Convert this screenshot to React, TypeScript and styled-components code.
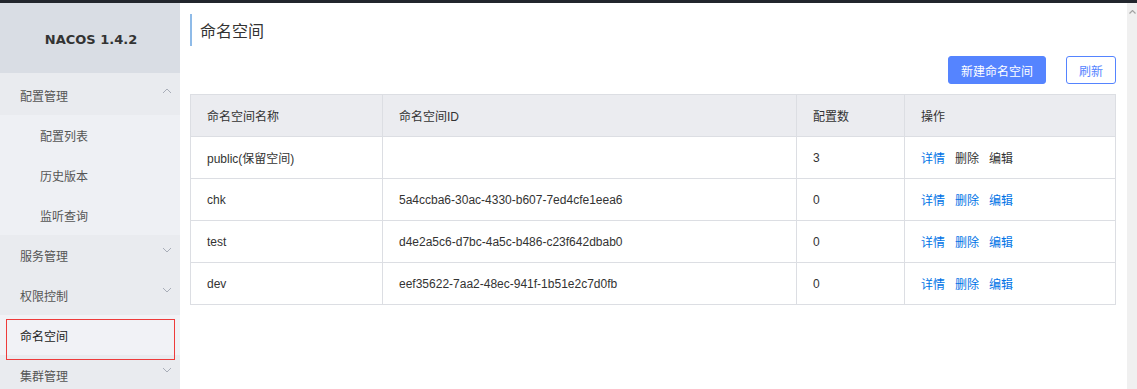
import React from "react";
import styled, { createGlobalStyle } from "styled-components";

const Global = createGlobalStyle`
  html, body { margin: 0; padding: 0; background: #fff; }
  body { font-family: "Liberation Sans", "Noto Sans CJK SC", sans-serif; font-size: 12px; color: #333; }
  * { box-sizing: border-box; }
`;

const Page = styled.div`
  width: 1137px;
  height: 389px;
  overflow: hidden;
  display: flex;
  flex-direction: column;
`;

const TopBar = styled.div`
  height: 3px;
  background: #22262d;
  flex: none;
`;

const Body = styled.div`
  flex: 1;
  display: flex;
  min-height: 0;
`;

const Sidebar = styled.nav`
  width: 180px;
  flex: none;
  background: #e9ebef;
  display: flex;
  flex-direction: column;
  overflow: hidden;
`;

const Brand = styled.div`
  height: 70px;
  flex: none;
  background: #d9dde4;
  display: flex;
  align-items: center;
  justify-content: center;
  font-family: "DejaVu Sans", sans-serif;
  font-weight: bold;
  font-size: 13px;
  color: #333;
  margin-bottom: 2px;
  padding: 3px 0 0 2px;
`;

const MenuItem = styled.div<{ $sub?: boolean; $active?: boolean }>`
  position: relative;
  flex: none;
  height: 40px;
  display: flex;
  align-items: center;
  justify-content: space-between;
  padding: 0 8px 0 ${(p) => (p.$sub ? "40px" : "20px")};
  font-family: "Noto Sans CJK SC", sans-serif;
  font-size: 12px;
  color: ${(p) => (p.$active ? "#222" : "#555")};
  background: ${(p) => (p.$active ? "#f1f2f6" : p.$sub ? "#eef0f4" : "transparent")};
  ${(p) =>
    p.$active &&
    `&::after {
      content: "";
      position: absolute;
      left: 6px;
      top: 4px;
      width: 167px;
      height: 39px;
      border: 1px solid #ee3b3b;
    }`}
`;

const Chevron = ({ up }: { up?: boolean }) => (
  <svg width="10" height="6" viewBox="0 0 10 6" style={{ marginTop: up ? -8 : -10 }}>
    <path
      d={up ? "M1 5 L5 1 L9 5" : "M1 1 L5 5 L9 1"}
      fill="none"
      stroke="#a8adb8"
      strokeWidth="1"
    />
  </svg>
);

const Main = styled.main`
  flex: 1;
  padding: 11px 11px 0 10px;
  display: flex;
  flex-direction: column;
  min-width: 0;
`;

const Title = styled.h1`
  margin: 0;
  height: 32px;
  border-left: 2px solid #8fbbe8;
  padding-left: 8px;
  display: flex;
  align-items: center;
  font-family: "Noto Sans CJK SC", sans-serif;
  font-weight: normal;
  font-size: 16px;
  color: #333;
`;

const Toolbar = styled.div`
  margin-top: 10px;
  display: flex;
  justify-content: flex-end;
  gap: 20px;
`;

const Button = styled.button<{ $primary?: boolean }>`
  height: 28px;
  padding: 0 12px;
  border-radius: 3px;
  font-family: "Noto Sans CJK SC", sans-serif;
  font-size: 12px;
  border: 1px solid #5584ff;
  background: ${(p) => (p.$primary ? "#5584ff" : "#fff")};
  color: ${(p) => (p.$primary ? "#fff" : "#5584ff")};
  cursor: pointer;
`;

const Table = styled.table`
  margin-top: 10px;
  width: 926px;
  border-collapse: collapse;
  table-layout: fixed;
  border: 1px solid #dcdee3;
`;

const Th = styled.th`
  height: 42px;
  background: #ebecf0;
  border: 1px solid #dcdee3;
  text-align: left;
  font-weight: normal;
  padding: 0 16px;
  font-family: "Liberation Sans", "Noto Sans CJK SC", sans-serif;
  color: #333;
`;

const Td = styled.td`
  height: 42px;
  border: 1px solid #dcdee3;
  padding: 0 16px;
  color: #333;
  font-family: "Liberation Sans", "Noto Sans CJK SC", sans-serif;
`;

const Actions = styled.div`
  display: flex;
  gap: 10px;
  font-family: "Noto Sans CJK SC", sans-serif;
`;

const Link = styled.a<{ $muted?: boolean }>`
  color: ${(p) => (p.$muted ? "#333" : "#0073e6")};
  text-decoration: none;
  cursor: pointer;
`;

const ScrollTrack = styled.div`
  width: 10px;
  flex: none;
  background: #f0f0f0;
  display: flex;
  justify-content: center;
  padding-top: 7px;
`;

const rows = [
  { name: "public(保留空间)", id: "", count: 3, reserved: true },
  { name: "chk", id: "5a4ccba6-30ac-4330-b607-7ed4cfe1eea6", count: 0 },
  { name: "test", id: "d4e2a5c6-d7bc-4a5c-b486-c23f642dbab0", count: 0 },
  { name: "dev", id: "eef35622-7aa2-48ec-941f-1b51e2c7d0fb", count: 0 },
];

export default function App() {
  return (
    <Page>
      <Global />
      <TopBar />
      <Body>
        <Sidebar>
          <Brand>NACOS 1.4.2</Brand>
          <MenuItem>
            配置管理 <Chevron up />
          </MenuItem>
          <MenuItem $sub>配置列表</MenuItem>
          <MenuItem $sub>历史版本</MenuItem>
          <MenuItem $sub>监听查询</MenuItem>
          <MenuItem>
            服务管理 <Chevron />
          </MenuItem>
          <MenuItem>
            权限控制 <Chevron />
          </MenuItem>
          <MenuItem $active>命名空间</MenuItem>
          <MenuItem>
            集群管理 <Chevron />
          </MenuItem>
        </Sidebar>
        <Main>
          <Title>命名空间</Title>
          <Toolbar>
            <Button $primary>新建命名空间</Button>
            <Button>刷新</Button>
          </Toolbar>
          <Table>
            <colgroup>
              <col style={{ width: 192 }} />
              <col style={{ width: 414 }} />
              <col style={{ width: 108 }} />
              <col />
            </colgroup>
            <thead>
              <tr>
                <Th>命名空间名称</Th>
                <Th>命名空间ID</Th>
                <Th>配置数</Th>
                <Th>操作</Th>
              </tr>
            </thead>
            <tbody>
              {rows.map((r) => (
                <tr key={r.name}>
                  <Td>{r.name}</Td>
                  <Td>{r.id}</Td>
                  <Td>{r.count}</Td>
                  <Td>
                    <Actions>
                      <Link>详情</Link>
                      <Link $muted={r.reserved}>删除</Link>
                      <Link $muted={r.reserved}>编辑</Link>
                    </Actions>
                  </Td>
                </tr>
              ))}
            </tbody>
          </Table>
        </Main>
        <ScrollTrack>
          <svg width="7" height="4" viewBox="0 0 7 4">
            <path d="M0.5 3.5 L3.5 0.5 L6.5 3.5" fill="none" stroke="#a3a3a3" strokeWidth="1.2" />
          </svg>
        </ScrollTrack>
      </Body>
    </Page>
  );
}
